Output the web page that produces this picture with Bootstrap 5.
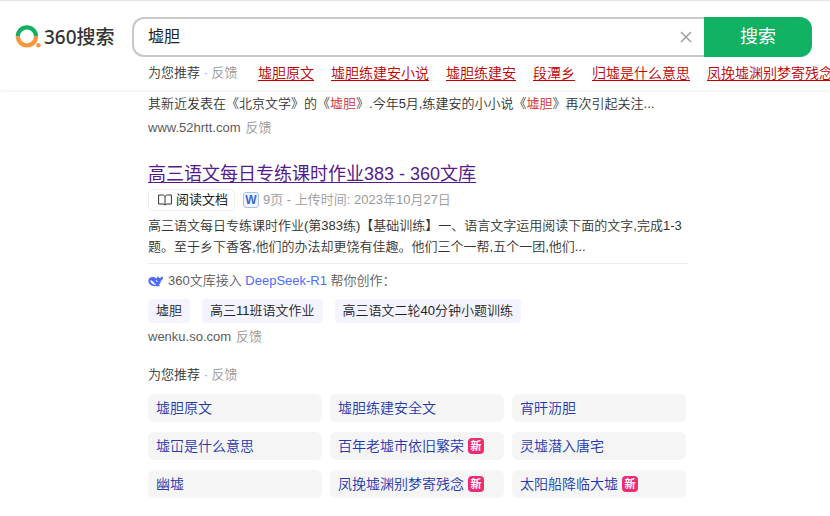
<!DOCTYPE html>
<html lang="zh-CN">
<head>
<meta charset="utf-8">
<meta name="viewport" content="width=device-width, initial-scale=1">
<title>墟胆_360搜索</title>
<link href="https://cdn.jsdelivr.net/npm/bootstrap@5.3.0/dist/css/bootstrap.min.css" rel="stylesheet">
<style>
body{font-family:"Liberation Sans","Noto Sans CJK SC",sans-serif;font-size:13px;line-height:20px;color:#333;background:#fff;font-weight:350;overflow-x:hidden}
.site-head{border-top:1px solid #e3e3e3;padding:16px 18px 7px 15px;box-shadow:0 1px 3px rgba(0,0,0,.08)}
.brand{width:117px;height:40px;color:#333;gap:3px;font:500 19px/24px "Noto Sans","Noto Sans CJK SC",sans-serif}
.search-box{height:40px;border:2px solid #c8c8c8;border-right:0;border-radius:12px 0 0 12px;padding-right:11px}
.search-box input{font-size:16px;padding:0 0 0 14px;color:#222;outline:0;background:none}
.clear-btn{width:14px;height:14px}
.search-btn{width:108px;height:40px;background:#10b163;color:#fff;font-size:18px;border-radius:0 12px 12px 0}
.hot-row{margin:6px -18px 0 133px;gap:17px;white-space:nowrap;overflow:hidden}
.hot-row>a{font-size:14px;color:#c00000;text-underline-offset:2px}
.hot-lead{width:93px}
.soft{color:#999;text-decoration:none}
.results{padding-left:148px;max-width:688px}
.first-hit{padding-top:3px}
.snippet{line-height:21px}
.hit{color:#d03030;font-style:normal}
.source{color:#5c5c5c;line-height:20px;margin-top:4px;gap:5px}
.result-title{font-size:18px;line-height:24px;margin:24px 0 0}
.result-title a{color:#551a8b;text-underline-offset:2px}
.doc-row{margin-top:3px}
.doc-btn{height:22px;border:1px solid #eee;border-radius:4px;padding:0 6px 0 9px;font-size:13px;color:#222;background:#fff}
.doc-kind{width:16px;height:16px;border:1px solid #a9c2f5;border-radius:3px;background:#f1f5ff;color:#3a67d6;font-size:12px;line-height:14px;font-weight:700}
.doc-meta{color:#999}
.doc-text{margin:4px 0 0}
.ai-box{border-top:1px solid #ececec;margin-top:6px;padding-top:7px}
.ai-box .ai-line{color:#5c5c5c}
.ai-name{color:#4d6bfe}
.ai-tags{column-gap:12px}
.ai-tag{background:#f3f4ff;color:#222;border-radius:4px;line-height:24px;padding:0 8px;text-decoration:none}
.related{margin-top:18px}
.related-grid{margin:9px 2px 0 0;row-gap:10px;column-gap:8px;grid-template-columns:repeat(3,1fr)}
.related-grid a{height:28px;border-radius:6px;background:#f5f5f5;color:#2338ae;font-size:14px;padding-left:8px;text-decoration:none;white-space:nowrap}
.new-flag{background:#ed2c71;color:#fff;border-radius:4px;width:16px;height:16px;font-size:11px;line-height:16px;font-weight:700}
</style>
</head>
<body>
<header class="site-head">
  <form class="d-flex" onsubmit="return false">
    <a href="#" class="brand d-flex align-items-center text-decoration-none flex-shrink-0" aria-label="360搜索">
      <svg width="26" height="26" viewBox="0 0 26 26" fill="none" aria-hidden="true">
        <path d="M2.8 12.5a9.1 9.1 0 0 1 18.2 0" stroke="#13b064" stroke-width="4.2"/>
        <path d="M2.8 12.3a9.1 9.1 0 0 0 18.2 0" stroke="#f9963a" stroke-width="4.2"/>
        <circle cx="23.4" cy="21.3" r="2.2" fill="#f9963a"/>
      </svg>
      <span>360搜索</span>
    </a>
    <div class="search-box d-flex flex-grow-1 align-items-center">
      <input class="border-0 flex-grow-1 w-100" type="text" value="墟胆" aria-label="搜索内容">
      <button type="button" class="clear-btn btn p-0 border-0 d-flex" aria-label="清除">
        <svg width="14" height="14" viewBox="0 0 14 14" stroke="#999" stroke-width="1.4" aria-hidden="true"><path d="M2 2l10 10M12 2L2 12"/></svg>
      </button>
    </div>
    <button type="submit" class="search-btn border-0 flex-shrink-0">搜索</button>
  </form>
  <nav class="hot-row d-flex" aria-label="为您推荐">
    <span class="hot-lead flex-shrink-0">为您推荐 <span class="soft">·</span> <a href="#" class="soft">反馈</a></span>
    <a href="#">墟胆原文</a>
    <a href="#">墟胆练建安小说</a>
    <a href="#">墟胆练建安</a>
    <a href="#">段潭乡</a>
    <a href="#">归墟是什么意思</a>
    <a href="#">凤挽墟渊别梦寄残念</a>
  </nav>
</header>
<main class="results">
  <article class="first-hit">
    <p class="snippet mb-0">其新近发表在《北京文学》的《<em class="hit">墟胆</em>》.今年5月,练建安的小小说《<em class="hit">墟胆</em>》再次引起关注...</p>
    <div class="source d-flex">www.52hrtt.com <a href="#" class="soft">反馈</a></div>
  </article>
  <article>
    <h3 class="result-title fw-normal"><a href="#">高三语文每日专练课时作业383 - 360文库</a></h3>
    <div class="doc-row d-flex align-items-center">
      <button type="button" class="doc-btn d-flex align-items-center gap-1">
        <svg width="14" height="12" viewBox="0 0 14 12" fill="none" stroke="#333" aria-hidden="true"><path d="M7 2.5C6.5 1.5 5.5 1 4.5 1H.6v9H5c1 0 1.7.4 2 1.2.3-.8 1-1.2 2-1.2h4.4V1H9.5C8.5 1 7.5 1.5 7 2.5zM7 2.5v8.500"/></svg>
        阅读文档
      </button>
      <span class="doc-kind ms-2 me-1 d-flex justify-content-center">W</span>
      <span class="doc-meta">9页 - 上传时间: 2023年10月27日</span>
    </div>
    <p class="snippet doc-text">高三语文每日专练课时作业(第383练)【基础训练】一、语言文字运用阅读下面的文字,完成1-3题。至于乡下香客,他们的办法却更饶有佳趣。他们三个一帮,五个一团,他们...</p>
    <section class="ai-box">
      <div class="ai-line d-flex align-items-center">
        <svg class="me-1" width="16" height="14" viewBox="0 0 16 14" aria-hidden="true"><path fill="#4d6bfe" d="M.4 6.300C.7 3.800 3 2.700 6.200 3.200c1 .2 1.700.7 2.400 1.300.6-.5.7-1.300.6-2.300 1 .3 1.600.9 2 1.700 1.500-.2 2.500-.8 3.700-1.600.4 2.200-.3 3.700-2 4.400-.2 2-1 3.300-2.200 4.300l1.500.8c-1.600.8-3 .5-4.100.3C4 12.800.1 10.500.4 6.300z"/><path fill="#fff" d="M2.300 6.200c1.700 0 2.800 1 3.700 2.300.8 1.200 1.500 1.900 2.300 2.300-1 .3-2 .1-2.800-.6-1.400-.2-3-1.800-3.200-4z"/><path fill="#fff" d="M7.700 6.200c1.100 0 1.900.7 1.900 1.700-.9 0-1.600-.6-1.900-1.700z"/></svg>
        <span>360文库接入 <span class="ai-name">DeepSeek-R1</span> 帮你创作：</span>
      </div>
      <div class="ai-tags d-flex flex-wrap mt-2">
        <a href="#" class="ai-tag">墟胆</a>
        <a href="#" class="ai-tag">高三11班语文作业</a>
        <a href="#" class="ai-tag">高三语文二轮40分钟小题训练</a>
      </div>
    </section>
    <div class="source d-flex">wenku.so.com <a href="#" class="soft">反馈</a></div>
  </article>
  <section class="related">
    <div>为您推荐 <span class="soft">·</span> <a href="#" class="soft">反馈</a></div>
    <div class="related-grid d-grid">
      <a href="#" class="d-flex align-items-center gap-1">墟胆原文</a>
      <a href="#" class="d-flex align-items-center gap-1">墟胆练建安全文</a>
      <a href="#" class="d-flex align-items-center gap-1">宵旰沥胆</a>
      <a href="#" class="d-flex align-items-center gap-1">墟冚是什么意思</a>
      <a href="#" class="d-flex align-items-center gap-1">百年老墟市依旧繁荣<span class="new-flag text-center">新</span></a>
      <a href="#" class="d-flex align-items-center gap-1">灵墟潜入唐宅</a>
      <a href="#" class="d-flex align-items-center gap-1">幽墟</a>
      <a href="#" class="d-flex align-items-center gap-1">凤挽墟渊别梦寄残念<span class="new-flag text-center">新</span></a>
      <a href="#" class="d-flex align-items-center gap-1">太阳船降临大墟<span class="new-flag text-center">新</span></a>
    </div>
  </section>
</main>
<script src="https://cdn.jsdelivr.net/npm/bootstrap@5.3.0/dist/js/bootstrap.bundle.min.js"></script>
</body>
</html>
